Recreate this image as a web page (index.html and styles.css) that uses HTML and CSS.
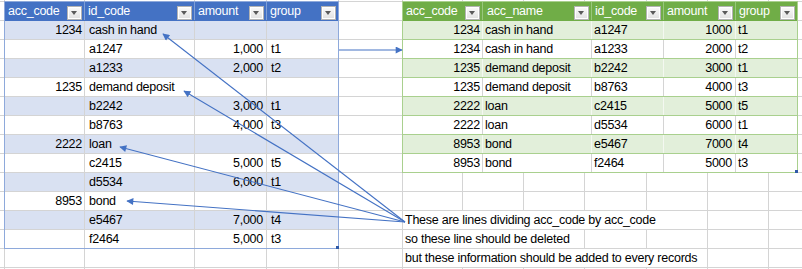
FILE: index.html
```html
<!DOCTYPE html>
<html>
<head>
<meta charset="utf-8">
<link rel="stylesheet" href="styles.css">
</head>
<body>
<div class="sheet">
  <div class="pane pane-left">
    <div class="tbl tbl-blue">
      <div class="tr th"><div class="td"><span>acc_code</span><i class="dd"></i></div><div class="td"><span>id_code</span><i class="dd"></i></div><div class="td"><span>amount</span><i class="dd"></i></div><div class="td"><span>group</span><i class="dd"></i></div></div>
      <div class="tr band"><div class="td num">1234</div><div class="td">cash in hand</div><div class="td"></div><div class="td"></div></div>
      <div class="tr"><div class="td"></div><div class="td">a1247</div><div class="td num amt">1,000</div><div class="td">t1</div></div>
      <div class="tr band"><div class="td"></div><div class="td">a1233</div><div class="td num amt">2,000</div><div class="td">t2</div></div>
      <div class="tr"><div class="td num">1235</div><div class="td">demand deposit</div><div class="td"></div><div class="td"></div></div>
      <div class="tr band"><div class="td"></div><div class="td">b2242</div><div class="td num amt">3,000</div><div class="td">t1</div></div>
      <div class="tr"><div class="td"></div><div class="td">b8763</div><div class="td num amt">4,000</div><div class="td">t3</div></div>
      <div class="tr band"><div class="td num">2222</div><div class="td">loan</div><div class="td"></div><div class="td"></div></div>
      <div class="tr"><div class="td"></div><div class="td">c2415</div><div class="td num amt">5,000</div><div class="td">t5</div></div>
      <div class="tr band"><div class="td"></div><div class="td">d5534</div><div class="td num amt">6,000</div><div class="td">t1</div></div>
      <div class="tr"><div class="td num">8953</div><div class="td">bond</div><div class="td"></div><div class="td"></div></div>
      <div class="tr band"><div class="td"></div><div class="td">e5467</div><div class="td num amt">7,000</div><div class="td">t4</div></div>
      <div class="tr last"><div class="td"></div><div class="td">f2464</div><div class="td num amt">5,000</div><div class="td">t3</div></div>
      <i class="handle"></i>
    </div>
  </div>
  <div class="pane pane-right">
    <div class="tbl tbl-green">
      <div class="tr th"><div class="td"><span>acc_code</span><i class="dd"></i></div><div class="td"><span>acc_name</span><i class="dd"></i></div><div class="td"><span>id_code</span><i class="dd"></i></div><div class="td"><span>amount</span><i class="dd"></i></div><div class="td"><span>group</span><i class="dd"></i></div></div>
      <div class="tr band"><div class="td num">1234</div><div class="td">cash in hand</div><div class="td">a1247</div><div class="td num amt">1000</div><div class="td">t1</div></div>
      <div class="tr"><div class="td num">1234</div><div class="td">cash in hand</div><div class="td">a1233</div><div class="td num amt">2000</div><div class="td">t2</div></div>
      <div class="tr band"><div class="td num">1235</div><div class="td">demand deposit</div><div class="td">b2242</div><div class="td num amt">3000</div><div class="td">t1</div></div>
      <div class="tr"><div class="td num">1235</div><div class="td">demand deposit</div><div class="td">b8763</div><div class="td num amt">4000</div><div class="td">t3</div></div>
      <div class="tr band"><div class="td num">2222</div><div class="td">loan</div><div class="td">c2415</div><div class="td num amt">5000</div><div class="td">t5</div></div>
      <div class="tr"><div class="td num">2222</div><div class="td">loan</div><div class="td">d5534</div><div class="td num amt">6000</div><div class="td">t1</div></div>
      <div class="tr band"><div class="td num">8953</div><div class="td">bond</div><div class="td">e5467</div><div class="td num amt">7000</div><div class="td">t4</div></div>
      <div class="tr last"><div class="td num">8953</div><div class="td">bond</div><div class="td">f2464</div><div class="td num amt">5000</div><div class="td">t3</div></div>
      <i class="handle"></i>
    </div>
    <div class="notes">
      <div class="note-row"><div class="note span5">These are lines dividing acc_code by acc_code</div></div>
      <div class="note-row"><div class="note span3">so these line should be deleted</div></div>
      <div class="note-row"><div class="note span5">but these information should be added to every records</div></div>
    </div>
  </div>
  <svg class="arrows" width="802" height="269" viewBox="0 0 802 269">
    <defs>
      <marker id="ah" viewBox="0 0 10 10" refX="9" refY="5" markerWidth="9" markerHeight="7" markerUnits="userSpaceOnUse" orient="auto">
        <path d="M0,0 L10,5 L0,10 z" fill="#4472c4"/>
      </marker>
    </defs>
    <g stroke="#4472c4" stroke-width="1.1" fill="none">
      <line x1="405" y1="222" x2="163" y2="34" marker-end="url(#ah)"/>
      <line x1="405" y1="222" x2="184" y2="91" marker-end="url(#ah)"/>
      <line x1="405" y1="222" x2="120" y2="147" marker-end="url(#ah)"/>
      <line x1="405" y1="222" x2="127" y2="201" marker-end="url(#ah)"/>
      <line x1="339" y1="50" x2="402" y2="50" marker-end="url(#ah)"/>
    </g>
  </svg>
</div>
</body>
</html>
```
FILE: styles.css
```css
html, body {
  margin: 0;
  padding: 0;
  background: #ffffff;
}
body {
  font-family: "Liberation Sans", Arial, sans-serif;
  font-size: 12.5px;
  letter-spacing: -0.25px;
  color: #000;
}
.sheet {
  position: relative;
  display: flex;
  width: 802px;
  height: 269px;
  overflow: hidden;
}
.pane {
  box-sizing: border-box;
  height: 269px;
  padding-top: 1px;
}
.pane-left {
  width: 402px;
  padding-left: 4px;
  background:
    linear-gradient(#d4d4d4, #d4d4d4) 4px 0 / 1px 100% no-repeat,
    linear-gradient(#d4d4d4, #d4d4d4) 84px 0 / 1px 100% no-repeat,
    linear-gradient(#d4d4d4, #d4d4d4) 194px 0 / 1px 100% no-repeat,
    linear-gradient(#d4d4d4, #d4d4d4) 266px 0 / 1px 100% no-repeat,
    linear-gradient(#d4d4d4, #d4d4d4) 338px 0 / 1px 100% no-repeat,
    repeating-linear-gradient(to bottom, #d4d4d4 0 1px, transparent 1px 19px) 0 1px;
}
.pane-right {
  width: 400px;
  background:
    linear-gradient(#d4d4d4, #d4d4d4) 0 0 / 1px 100% no-repeat,
    linear-gradient(#d4d4d4, #d4d4d4) 60px 0 / 1px 100% no-repeat,
    linear-gradient(#d4d4d4, #d4d4d4) 121px 0 / 1px 100% no-repeat,
    linear-gradient(#d4d4d4, #d4d4d4) 182px 0 / 1px 100% no-repeat,
    linear-gradient(#d4d4d4, #d4d4d4) 244px 0 / 1px 100% no-repeat,
    linear-gradient(#d4d4d4, #d4d4d4) 305px 0 / 1px 100% no-repeat,
    linear-gradient(#d4d4d4, #d4d4d4) 366px 0 / 1px 100% no-repeat,
    repeating-linear-gradient(to bottom, #d4d4d4 0 1px, transparent 1px 19px) 0 1px;
}

/* tables */
.tbl {
  position: relative;
  box-sizing: border-box;
  border-style: solid;
  border-width: 1px 1px 0 1px;
  background: #fff;
}
.tbl-blue {
  width: 335px;
  border-color: #8ea9db;
}
.tbl-green {
  width: 396px;
  border-color: #a9d08e;
}
.tr {
  display: grid;
  box-sizing: border-box;
  height: 19px;
  border-bottom: 1px solid #d4d4d4;
}
.tbl-blue .tr { grid-template-columns: 80px 110px 72px 71px; }
.tbl-green .tr { grid-template-columns: 80px 109px 72px 72px 61px; }
.tbl-blue .band { background: #d9e1f2; }
.tbl-green .band { background: #e2efda; }
.tbl-green .tr { border-bottom-color: #a9d08e; }
.tbl-blue .tr.last { border-bottom-color: #8ea9db; }

.td {
  box-sizing: border-box;
  height: 18px;
  line-height: 18px;
  padding: 0 2px 0 3px;
  border-right: 1px solid #d4d4d4;
  white-space: nowrap;
  overflow: visible;
}
.td:last-child { border-right: 0; }
.tbl-blue .td { padding-left: 4px; }
.tbl-green .td { padding-left: 2px; }
.td.num { text-align: right; padding-right: 2px; }
.td.amt { padding-right: 3px; }
.tbl-green .band .td { border-right-color: #f4f8f1; }

/* header */
.th .td {
  display: flex;
  align-items: flex-end;
  justify-content: space-between;
  color: #fff;
  padding: 0 2px 0 3px;
}
.th .td span { align-self: center; }
.tbl-blue .th { background: #4472c4; border-bottom-color: #4472c4; }
.tbl-blue .th .td { border-right-color: #7f9fd6; }
.tbl-green .th { background: #70ad47; border-bottom-color: #70ad47; }
.tbl-green .th .td { border-right-color: #98c77c; }
.tbl-green .th .td:first-child { padding-left: 3px; }
.tbl-green .th .td:nth-child(2) { padding-left: 4px; }

.dd {
  position: relative;
  flex: none;
  box-sizing: border-box;
  width: 15px;
  height: 14px;
  margin-bottom: 0;
  border: 1px solid #b3b3b3;
  background: linear-gradient(#fbfbfb, #e1e1e1);
  box-shadow: inset 0 0 0 1px #ffffff;
}
.dd::after {
  content: "";
  position: absolute;
  left: 3px;
  top: 4px;
  border-left: 3.5px solid transparent;
  border-right: 3.5px solid transparent;
  border-top: 4px solid #5a5a5a;
}

.handle {
  position: absolute;
  right: -1px;
  bottom: 0;
  width: 3px;
  height: 3px;
  background: #2f5aa8;
}

/* notes */
.notes {
  margin-top: 38px;
}
.note-row {
  height: 19px;
}
.note {
  box-sizing: border-box;
  height: 18px;
  line-height: 18px;
  margin-left: 1px;
  padding-left: 2px;
  background: #fff;
  white-space: nowrap;
}
.span5 { width: 304px; }
.span3 { width: 181px; }

.arrows {
  position: absolute;
  left: 0;
  top: 0;
  pointer-events: none;
}
```
